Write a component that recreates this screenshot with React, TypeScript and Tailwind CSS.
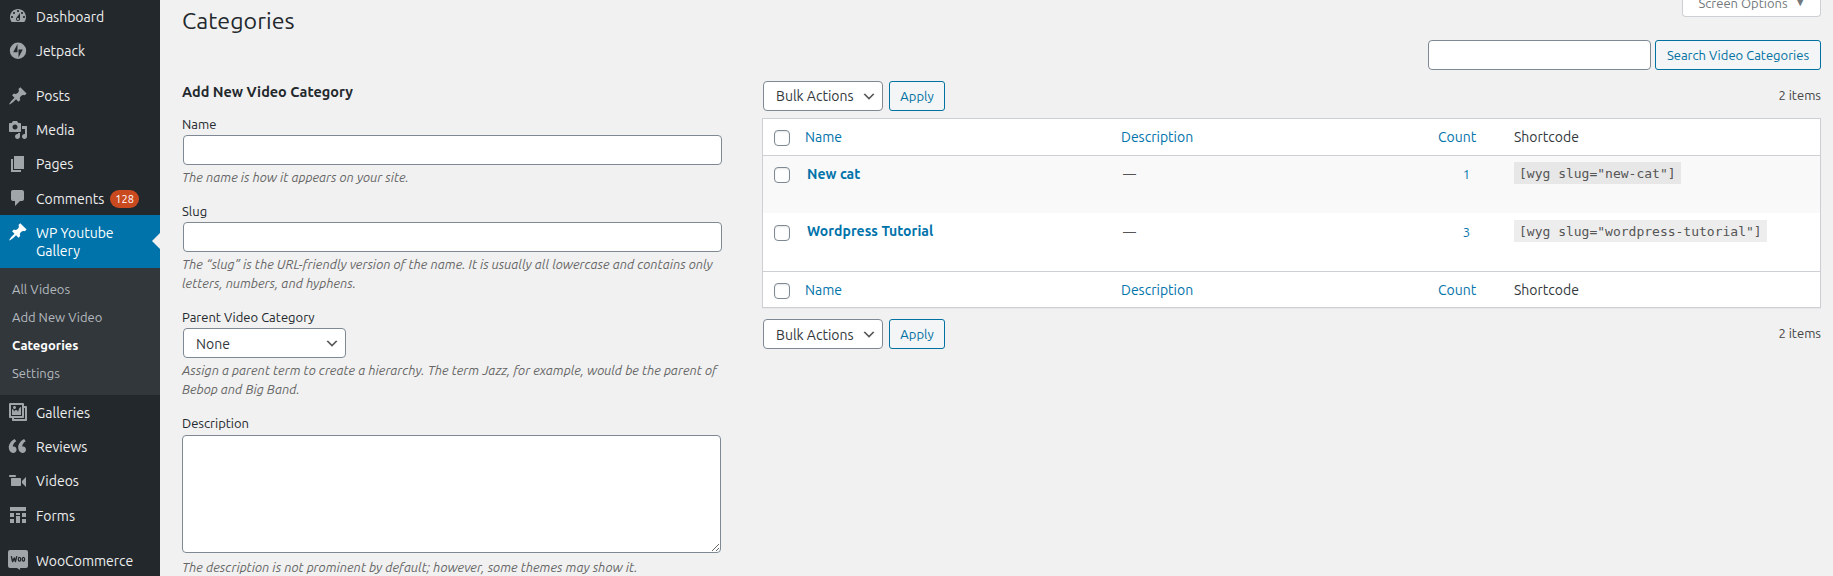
import React from "react";

const ICONS = {
  dashboard:
    "M3.76 15h12.48C17.34 13.63 18 11.89 18 10c0-4.41-3.58-8-8-8s-8 3.59-8 8c0 1.89.66 3.63 1.76 5zM10 3c.55 0 1 .45 1 1s-.45 1-1 1-1-.45-1-1 .45-1 1-1zM6 5c.55 0 1 .45 1 1s-.45 1-1 1-1-.45-1-1 .45-1 1-1zm8 0c.55 0 1 .45 1 1s-.45 1-1 1-1-.45-1-1 .45-1 1-1zm-5.37 5.55L12 6v6c0 1.1-.9 2-2 2s-2-.9-2-2c0-.57.24-1.08.63-1.45zM4 9c.55 0 1 .45 1 1s-.45 1-1 1-1-.45-1-1 .45-1 1-1zm12 0c.55 0 1 .45 1 1s-.45 1-1 1-1-.45-1-1 .45-1 1-1zm-5 3c0-.55-.45-1-1-1s-1 .45-1 1 .45 1 1 1 1-.45 1-1z",
  jetpack: "M10 1.6a8.2 8.2 0 1 0 0 16.4a8.2 8.2 0 1 0 0-16.4zM9.5 11.2H5.2l4.3-8.2v8.2zM10.5 16.6V8.4h4.3l-4.3 8.2z",
  pin: "M10.44 3.02l1.82-1.82 6.36 6.35-1.83 1.82c-1.05-.68-2.48-.57-3.41.36l-.75.75c-.92.93-1.04 2.35-.35 3.41l-1.83 1.82-2.41-2.41-2.8 2.79c-.42.42-3.38 2.71-3.8 2.29s1.86-3.39 2.28-3.81l2.79-2.79L4.1 9.36l1.83-1.82c1.05.69 2.48.57 3.4-.36l.75-.75c.93-.92 1.05-2.35.36-3.41z",
  media:
    "M13 11V4c0-.55-.45-1-1-1h-1.67L9 1H5L3.67 3H2c-.55 0-1 .45-1 1v7c0 .55.45 1 1 1h10c.55 0 1-.45 1-1zM7 4.5c1.38 0 2.5 1.12 2.5 2.5S8.38 9.5 7 9.5 4.5 8.38 4.5 7 5.62 4.5 7 4.5zM14 6h5v10.5c0 1.38-1.12 2.5-2.5 2.5S14 17.88 14 16.5s1.12-2.5 2.5-2.5c.17 0 .34.02.5.05V9h-3V6zm-4 8.05V13h2v3.5c0 1.38-1.12 2.5-2.5 2.5S7 17.88 7 16.5 8.12 14 9.5 14c.17 0 .34.02.5.05z",
  pages: "M6 15V2h10v13H6zm-1 1h8v2H3V5h2v11z",
  comment: "M5 2h9c1.1 0 2 .9 2 2v7c0 1.1-.9 2-2 2h-2l-5 5v-5H5c-1.1 0-2-.9-2-2V4c0-1.1.9-2 2-2z",
  gallery:
    "M16 4h1.96c.57 0 1.04.47 1.04 1.04v12.92c0 .57-.47 1.04-1.04 1.04H5.04C4.47 19 4 18.53 4 17.96V16H2.04C1.47 16 1 15.53 1 14.96V2.04C1 1.47 1.47 1 2.04 1h12.92c.57 0 1.04.47 1.04 1.04V4zM3 14h11V3H3v11zm5-8.5C8 4.67 7.33 4 6.5 4S5 4.67 5 5.5 5.67 7 6.5 7 8 6.33 8 5.5zm2 4.5s1-5 3-5v8H4V7c2 0 2 3 2 3s.33-2 2-2 2 2 2 2zm7 7V6h-1v8.96c0 .57-.47 1.04-1.04 1.04H6v1h11z",
  quote:
    "M8.54 12.74c0-.87-.24-1.61-.72-2.22-.73-.92-2.14-1.03-2.96-.85-.34-1.93 1.3-4.39 3.42-5.45L6.65 1.94C3.45 3.46.31 6.96.85 11.37 1.19 14.16 2.8 16 5.08 16c1 0 1.83-.29 2.48-.88.66-.59.98-1.38.98-2.38zm9.43 0c0-.87-.24-1.61-.72-2.22-.73-.92-2.14-1.03-2.96-.85-.34-1.93 1.3-4.39 3.42-5.45l-1.63-2.28c-3.2 1.52-6.34 5.02-5.8 9.43.34 2.79 1.95 4.63 4.23 4.63 1 0 1.83-.29 2.48-.88.66-.59.98-1.38.98-2.38z",
  video:
    "M8 5c0-.55-.45-1-1-1H2c-.55 0-1 .45-1 1 0 .57.49 1 1 1h5c.55 0 1-.45 1-1zm6 5l4-4v10l-4-4v-2zm-1 4V8c0-.55-.45-1-1-1H4c-.55 0-1 .45-1 1v6c0 .55.45 1 1 1h8c.55 0 1-.45 1-1z",
  forms: "M2 2h16v4H2zM2 8h4v4H2zM8 8h4v2H8zM14 8h4v4h-4zM2 14h4v4H2zM8 11h4v7H8zM14 14h4v4h-4z",
};

type IconName = keyof typeof ICONS;

function Icon({ name }: { name: IconName }) {
  return (
    <svg viewBox="0 0 20 20" className="h-5 w-5 fill-current" fillRule="evenodd">
      <path d={ICONS[name]} />
    </svg>
  );
}

function WooIcon() {
  return (
    <svg viewBox="0 0 20 20" className="h-5 w-5">
      <path className="fill-current" d="M2 0h16a2 2 0 0 1 2 2v14a2 2 0 0 1-2 2h-6l.2 2-3.2-2H2a2 2 0 0 1-2-2V2a2 2 0 0 1 2-2z" />
      <path d="M3.4 6.6l1.2 5 1.7-3.6 1.1 3.6 1.3-5" fill="none" stroke="#23282d" strokeWidth="1.4" strokeLinejoin="round" strokeLinecap="round" />
      <ellipse cx="11.5" cy="9.2" rx="1.2" ry="1.9" fill="none" stroke="#23282d" strokeWidth="1.3" />
      <ellipse cx="15.4" cy="9.2" rx="1.2" ry="1.9" fill="none" stroke="#23282d" strokeWidth="1.3" />
    </svg>
  );
}

interface MenuItemProps {
  icon: React.ReactNode;
  label: string;
  badge?: string;
  low?: boolean;
}

function MenuItem({ icon, label, badge, low = false }: MenuItemProps) {
  return (
    <a className="flex h-[34px] shrink-0 items-start text-[#eee]">
      <span className="flex h-[34px] w-9 items-center justify-center text-[#a0a5aa]">{icon}</span>
      <span className={"text-sm leading-[18px] " + (low ? "pt-[9px]" : "pt-2")}>{label}</span>
      {badge && (
        <span className="mt-[9px] ml-[6px] flex h-[18px] items-center rounded-full bg-[#ca4a1f] px-[5px] text-[11px] leading-[18px] text-white">
          {badge}
        </span>
      )}
    </a>
  );
}

function Sidebar() {
  return (
    <aside className="flex w-40 shrink-0 flex-col bg-[#23282d]">
      <MenuItem icon={<Icon name="dashboard" />} label="Dashboard" />
      <MenuItem icon={<Icon name="jetpack" />} label="Jetpack" />
      <div className="h-[11px] shrink-0" />
      <MenuItem icon={<Icon name="pin" />} label="Posts" />
      <MenuItem icon={<Icon name="media" />} label="Media" />
      <MenuItem icon={<Icon name="pages" />} label="Pages" />
      <MenuItem icon={<Icon name="comment" />} label="Comments" badge="128" low />
      <a className="relative flex h-[53px] shrink-0 bg-[#0073aa] text-white">
        <span className="flex h-[34px] w-9 items-center justify-center">
          <Icon name="pin" />
        </span>
        <span className="w-24 pt-[9px] text-sm leading-[18px]">WP Youtube Gallery</span>
        <span className="absolute top-[18px] right-0 border-y-8 border-r-8 border-y-transparent border-r-[#f1f1f1]" />
      </a>
      <ul className="flex h-[127px] shrink-0 flex-col bg-[#32373c] pt-[7px] pl-3 text-[13px] leading-[28px] text-[#b4b9be]">
        <li>All Videos</li>
        <li>Add New Video</li>
        <li className="font-bold text-white">Categories</li>
        <li>Settings</li>
      </ul>
      <MenuItem icon={<Icon name="gallery" />} label="Galleries" low />
      <div className="h-px shrink-0" />
      <MenuItem icon={<Icon name="quote" />} label="Reviews" />
      <MenuItem icon={<Icon name="video" />} label="Videos" />
      <MenuItem icon={<Icon name="forms" />} label="Forms" low />
      <div className="h-[11px] shrink-0" />
      <MenuItem icon={<WooIcon />} label="WooCommerce" low />
    </aside>
  );
}

function Chevron() {
  return (
    <svg viewBox="0 0 20 20" className="h-4 w-4">
      <path d="M5 6.8l5 5 5-5 1.8 1-6.8 6.8-6.8-6.8 1.8-1z" fill="#555" />
    </svg>
  );
}

function SelectBox({ label, wide = false, low = false }: { label: string; wide?: boolean; low?: boolean }) {
  return (
    <div
      className={
        "flex h-[30px] items-center justify-between rounded-[4px] border border-[#7e8993] bg-white pr-[5px] pl-3 text-sm text-[#32373c] " +
        (wide ? "w-[163px]" : "w-[120px]")
      }
    >
      <span className={low ? "pt-[2px]" : ""}>{label}</span>
      <Chevron />
    </div>
  );
}

function TextField() {
  return <input className="ml-px block h-[30px] w-[539px] rounded-[4px] border border-[#7e8993] bg-white outline-none" />;
}

const LABEL = "block h-[21px] text-[13px] leading-[21px] text-[#23282d]";
const HINT = "w-[560px] text-[13px] leading-[19px] tracking-[0.02px] text-[#666] italic";

function CategoryForm() {
  return (
    <form className="flex w-[541px] flex-col">
      <h2 className="mt-[9px] h-5 text-[14.45px] leading-5 font-bold text-[#23282d]">Add New Video Category</h2>
      <div className="mt-[12px] h-[87px]">
        <label className={LABEL}>Name</label>
        <TextField />
        <p className={"mt-[3px] " + HINT}>The name is how it appears on your site.</p>
      </div>
      <div className="h-[106px]">
        <label className={LABEL}>Slug</label>
        <TextField />
        <p className={"mt-[3px] " + HINT}>
          The “slug” is the URL-friendly version of the name. It is usually all lowercase and contains only
          <br />
          letters, numbers, and hyphens.
        </p>
      </div>
      <div className="h-[106px]">
        <label className={LABEL}>Parent Video Category</label>
        <div className="ml-px">
          <SelectBox label="None" wide low />
        </div>
        <p className={"mt-[3px] " + HINT}>
          Assign a parent term to create a hierarchy. The term Jazz, for example, would be the parent of
          <br />
          Bebop and Big Band.
        </p>
      </div>
      <label className={LABEL}>Description</label>
      <textarea className="mt-px block h-[118px] w-[539px] resize rounded-[4px] border border-[#7e8993] bg-white outline-none" />
      <p className={"mt-[5px] " + HINT}>The description is not prominent by default; however, some themes may show it.</p>
    </form>
  );
}

function Checkbox() {
  return <span className="block h-4 w-4 rounded-[4px] border border-[#7e8993] bg-white shadow-[inset_0_1px_2px_rgba(0,0,0,0.1)]" />;
}

function Button({ label, className }: { label: string; className: string }) {
  return (
    <button
      className={
        "flex h-[30px] items-center justify-center rounded-[3px] border border-[#0071a1] bg-[#f3f5f6] pt-px text-[13px] text-[#0071a1] " +
        className
      }
    >
      {label}
    </button>
  );
}

function TableNav({ low = false }: { low?: boolean }) {
  return (
    <div className="flex h-[30px] items-center">
      <div className="ml-px">
        <SelectBox label="Bulk Actions" low={low} />
      </div>
      <Button label="Apply" className="ml-[6px] w-14" />
      <span className="ml-auto text-[13px] text-[#444]">2 items</span>
    </div>
  );
}

const COLS = "grid grid-cols-[42px_316px_317px_75px_1fr] text-sm";

function HeadRow({ foot = false }: { foot?: boolean }) {
  return (
    <div className={COLS + " text-[#0073aa] " + (foot ? "h-[35px]" : "h-[36px]")}>
      <div className="pt-[11px] pl-[11px]">
        <Checkbox />
      </div>
      <div className="pt-[9px] leading-[18px]">Name</div>
      <div className="pt-[9px] leading-[18px]">Description</div>
      <div className="pt-[9px] leading-[18px]">Count</div>
      <div className="pt-[9px] pl-px leading-[18px] text-[#32373c]">Shortcode</div>
    </div>
  );
}

function BodyRow({ name, count, code, striped }: { name: string; count: string; code: string; striped?: boolean }) {
  return (
    <div className={COLS + (striped ? " h-[57px] bg-[#f9f9f9]" : " h-[58px] pt-px")}>
      <div className="pt-[11px] pl-[11px]">
        <Checkbox />
      </div>
      <div className={"pl-[2px] leading-[18px] font-bold tracking-[0.05px] text-[#0073aa] " + (striped ? "pt-[9px]" : "pt-[8px]")}>{name}</div>
      <div className="pt-[8px] pl-[2px] text-[13px] leading-[18px] text-[#555]">—</div>
      <div className="pt-[9px] pr-[43px] text-right text-[13px] leading-[18px] text-[#0073aa]">{count}</div>
      <div className="pt-[6px] pl-px">
        <code className="block h-[22px] w-fit bg-black/[0.07] px-[5px] font-['DejaVu_Sans_Mono',monospace] text-[13px] leading-[23px] text-[#555]">
          {code}
        </code>
      </div>
    </div>
  );
}

function CategoryTable() {
  return (
    <div className="mt-[7px] mb-[11px] border border-[#ccd0d4] bg-white shadow-[0_1px_1px_rgba(0,0,0,0.04)]">
      <HeadRow />
      <div className="border-y border-[#ccd0d4]">
        <BodyRow name="New cat" count="1" code={'[wyg slug="new-cat"]'} striped />
        <BodyRow name="Wordpress Tutorial" count="3" code={'[wyg slug="wordpress-tutorial"]'} />
      </div>
      <HeadRow foot />
    </div>
  );
}

export default function App() {
  return (
    <div className="flex h-[576px] w-[1833px] overflow-hidden bg-[#f1f1f1] font-['Ubuntu','Noto_Sans',sans-serif]">
      <Sidebar />
      <main className="flex min-w-0 flex-1 flex-col pr-3 pl-[22px]">
        <header className="flex h-10 shrink-0 justify-between">
          <h1 className="pt-[4px] text-[23.2px] leading-[32px] tracking-[0.05px] text-[#23282d]">Categories</h1>
          <div className="flex h-[17px] w-[139px] items-end justify-center overflow-hidden rounded-b-[4px] border border-t-0 border-[#ccd0d4] bg-white pl-[2px] text-[13px] text-[#72777c]">
            <span className="flex pb-[4px] leading-[18px]">
              Screen Options <span className="-mt-[2px] ml-[6px] text-[13px]">▼</span>
            </span>
          </div>
        </header>
        <div className="flex h-[30px] shrink-0 justify-end gap-1">
          <input className="h-[30px] w-[223px] rounded-[4px] border border-[#7e8993] bg-white outline-none" />
          <Button label="Search Video Categories" className="w-[166px]" />
        </div>
        <div className="flex shrink-0 pt-[3px]">
          <CategoryForm />
          <section className="ml-[39px] flex flex-1 flex-col pt-[8px]">
            <TableNav />
            <CategoryTable />
            <TableNav low />
          </section>
        </div>
      </main>
    </div>
  );
}
